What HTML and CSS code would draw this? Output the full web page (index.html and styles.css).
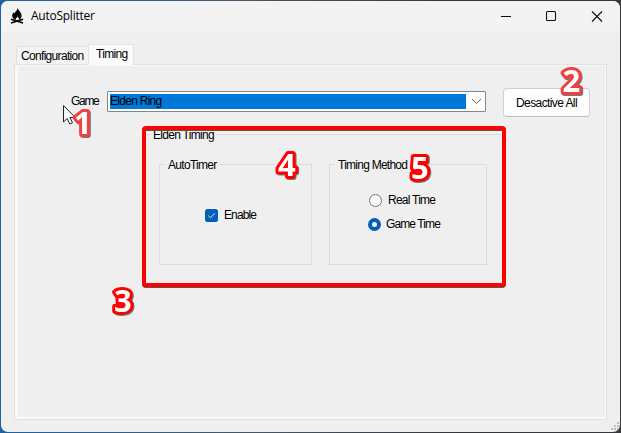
FILE: index.html
```html
<!DOCTYPE html>
<html lang="en">
<head>
<meta charset="utf-8">
<title>AutoSplitter</title>
<link rel="stylesheet" href="styles.css">
</head>
<body>
<div class="window">
  <header class="titlebar">
    <svg class="logo" width="14" height="16" viewBox="0 0 14 16"><path d="M7.500 0C8 2 11.800 4.500 11.600 8c-.1 2-1.300 3.300-2.700 3.800.4-1.400-.7-2.300-1.500-3.300-.4 1.400-1.900 1.800-1.800 3.400C3.700 11.300 2 9.800 2.200 7.500c.1-1.300.8-2.100 1.200-3.200l.8 1.200C5.100 3.500 7.500 2.600 7.500 0Z"/><path d="M1 11.200 13 15M13 11.200 1 15" stroke="#000" stroke-width="1.700"/></svg>
    <h1>AutoSplitter</h1>
    <svg class="controls" width="104" height="12" viewBox="0 0 104 12"><path d="M2 6.500H12M93 1.500l10 10M103 1.500 93 11.500"/><rect x="47.500" y="1.500" width="9" height="9" rx="1"/></svg>
  </header>
  <nav class="tabs"><span class="tab config">Configuration</span><span class="tab active">Timing</span></nav>
  <main class="panel">
    <div class="row">
      <label class="game">Game</label>
      <div class="combo"><span class="value">Elden Ring</span><svg width="11" height="7" viewBox="0 0 11 7"><path d="m1 1 4.500 4.500L10 1"/></svg></div>
      <button>Desactive All</button>
    </div>
    <section class="timing">
      <h2><span>Elden Timing</span></h2>
      <div class="groups">
        <div class="group auto">
          <h3><span>AutoTimer</span></h3>
          <label class="enable"><svg width="13" height="13" viewBox="0 0 13 13"><rect width="13" height="13" rx="2.500" fill="#005fb8"/><path d="m3.300 6.700 2.200 2.100 4.300-4.500" fill="none" stroke="#dceaff"/></svg><span>Enable</span></label>
        </div>
        <div class="group method">
          <h3><span>Timing Method</span></h3>
          <label class="real"><i class="radio"></i><span>Real Time</span></label>
          <label class="gametime"><i class="radio on"></i><span>Game Time</span></label>
        </div>
      </div>
    </section>
  </main>
  <svg class="grip" width="8" height="8" viewBox="0 0 8 8"><path d="M6 0h2v2H6zM3 3h2v2H3zM6 3h2v2H6zM0 6h2v2H0zM3 6h2v2H3zM6 6h2v2H6z"/></svg>
</div>
<svg class="notes" width="621" height="433" viewBox="0 0 621 433">
  <rect class="frame" x="144" y="128" width="360" height="157" rx="2"/>
  <path class="pointer" d="M63.500 105.500v16.500l3.700-3.500 2.600 5.500 2.700-1.200-2.500-5.300h5.200Z"/>
  <g class="nums"><text class="soft" x="74" y="133.500">1</text><text class="soft" x="562.500" y="91.500">2</text><text x="114" y="311.500">3</text><text x="278" y="175.500">4</text><text x="411" y="179">5</text></g>
</svg>
</body>
</html>
```
FILE: styles.css
```css
* { box-sizing: border-box; }
body {
  margin: 0; width: 621px; height: 433px; padding: 1px; overflow: hidden;
  background: linear-gradient(90deg, #1f62a0 0, #465766 40%, #333539 75%, #36383c 100%);
  font: 12px/16px "Liberation Sans", Arial, sans-serif; color: #000;
}
.window { width: 619px; height: 431px; background: #efefef; border-radius: 7px; overflow: hidden; position: relative; }
.titlebar { height: 30px; background: #f3f3f3; display: flex; align-items: center; padding: 0 17px 0 9px; }
.logo { margin-right: 7px; }
h1 { font: 12px/16px "Open Sans", sans-serif; margin: 0; flex: 1; letter-spacing: -.25px; }
.controls { fill: none; stroke: #111; stroke-width: 1.1; }
.tabs { height: 33px; padding-left: 15px; display: flex; align-items: flex-end; }
.tab { height: 18px; width: 73px; border: 1px solid #e2e2e2; border-bottom: 0; background: #f3f3f3; padding: 1px 0 0 4px; letter-spacing: -.7px; white-space: nowrap; }
.config { letter-spacing: -.68px; }
.tab.active { height: 21px; width: 46px; margin: 0 0 -1px -1px; background: #fafafa; padding: 1px 0 0 7px; z-index: 1; }
.panel { margin: 0 13px; width: 593px; height: 356px; border: 1px solid #e0e0e0; box-shadow: inset 3px 1px #f9f9f9, inset -1px -2px #f9f9f9; padding-top: 23px; }
.row { display: flex; height: 30px; align-items: flex-start; }
.game { margin: 5px 0 0 56px; width: 36px; letter-spacing: -1.3px; }
.combo { margin-top: 3px; width: 379px; height: 21px; border: 1px solid #858585; background: #fff; border-radius: 1px; padding: 2px; display: flex; align-items: center; }
.value { width: 356px; height: 15px; line-height: 14px; background: #0078d7; margin-right: 5px; letter-spacing: -.72px; }
.combo svg { fill: none; stroke: #606060; }
button { margin-left: 17px; width: 87px; height: 29px; border: 1px solid #d0d0d0; border-bottom-color: #bcbcbc; border-radius: 4px; background: #fdfdfd; padding: 0; font: inherit; color: inherit; letter-spacing: -.6px; }
.timing { margin: 9px 0 0 130px; width: 359px; }
h2, h3 { margin: 0; font: inherit; display: flex; align-items: center; }
h2::before, h2::after, h3::before, h3::after { content: ""; height: 1px; margin-bottom: 2px; background: #dcdcdc; }
h2::before, h3::before { width: 6px; }
h2::after, h3::after { flex: 1; }
h2 span, h3 span { padding: 0 2px; }
h2 span { letter-spacing: -.7px; }
.groups { display: flex; gap: 17px; padding: 14px 0 0 14px; }
.group { width: 153px; height: 108px; position: relative; }
.group::before { content: ""; position: absolute; inset: 7px 0 0; border: 1px solid #dcdcdc; border-top: 0; }
.method { width: 158px; }
.group label { display: flex; align-items: center; position: relative; }
.group h3 span { padding-left: 3px; }
.auto h3 span { letter-spacing: -.7px; }
.method h3 span { letter-spacing: -.75px; }
.enable { margin: 34px 0 0 46px; gap: 6px; letter-spacing: -.9px; }
.real { margin: 19px 0 0 40px; gap: 6px; letter-spacing: -.75px; }
.gametime { margin: 8px 0 0 39px; gap: 5px; letter-spacing: -.9px; }
.radio { width: 13px; height: 13px; border: 1px solid #777; border-radius: 50%; background: #f8f8f8; }
.radio.on { border: 4px solid #005fb8; background: #fff; }
.grip { position: absolute; right: 1px; bottom: 2px; fill: #bbb; }
.notes { position: absolute; left: 0; top: 0; }
.frame { fill: none; stroke: #f00; stroke-width: 4; filter: drop-shadow(0 1px .4px #555); }
.pointer { fill: #fff; stroke: #223; stroke-width: 1; }
.nums { font: bold 31px "Open Sans", Arial, sans-serif; fill: #fff; stroke: #f00; stroke-width: 6; stroke-linejoin: round; paint-order: stroke; filter: drop-shadow(1px 1px .6px #777); }
.soft { stroke: #f04040; }
```
